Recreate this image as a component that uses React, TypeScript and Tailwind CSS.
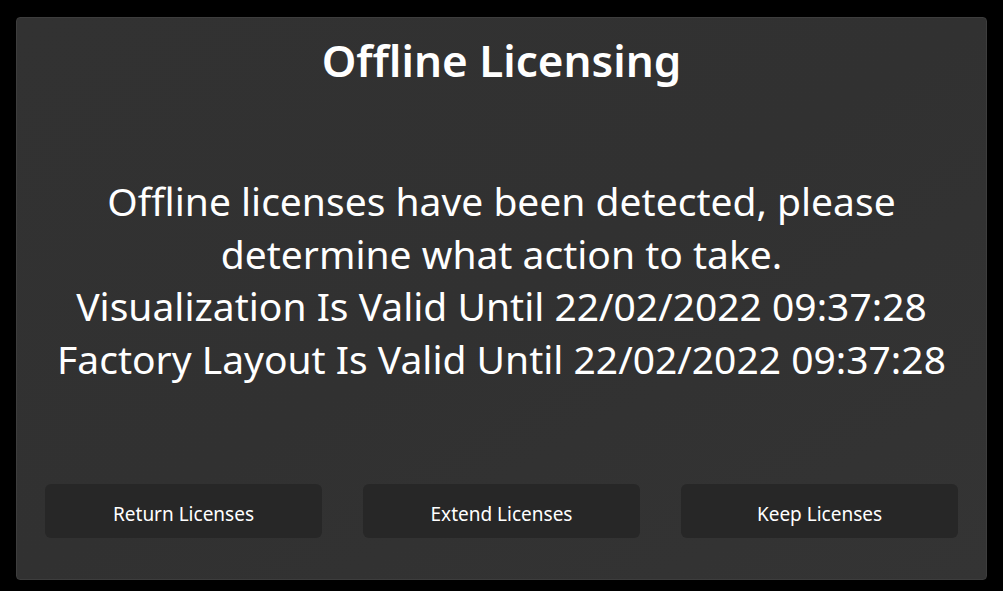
export default function App() {
  const buttons = ["Return Licenses", "Extend Licenses", "Keep Licenses"];

  return (
    <div className="h-[591px] w-[1003px] bg-black pl-[16px] pt-[17px]">
      <div
        className="flex h-[563px] w-[971px] flex-col rounded-[4px] border border-[#3d3d3d] bg-gradient-to-br from-[#323232] via-[#313131] to-[#343434] text-white"
        style={{ fontFamily: '"Noto Sans", "Open Sans", sans-serif' }}
      >
        <h1 className="mt-[12px] text-center text-[44px] leading-[60px] font-semibold">
          Offline Licensing
        </h1>

        <div className="mt-[85px] text-center text-[39px] leading-[52.7px]">
          <p>Offline licenses have been detected, please</p>
          <p>determine what action to take.</p>
          <p>Visualization Is Valid Until 22/02/2022 09:37:28</p>
          <p>Factory Layout Is Valid Until 22/02/2022 09:37:28</p>
        </div>

        <div className="mt-auto mb-[41px] flex gap-[41px] px-[28px]">
          {buttons.map((label) => (
            <button
              key={label}
              className="h-[54px] w-[277px] rounded-[6px] bg-[#272727] pt-[6px] text-[19px] text-white"
            >
              {label}
            </button>
          ))}
        </div>
      </div>
    </div>
  );
}
